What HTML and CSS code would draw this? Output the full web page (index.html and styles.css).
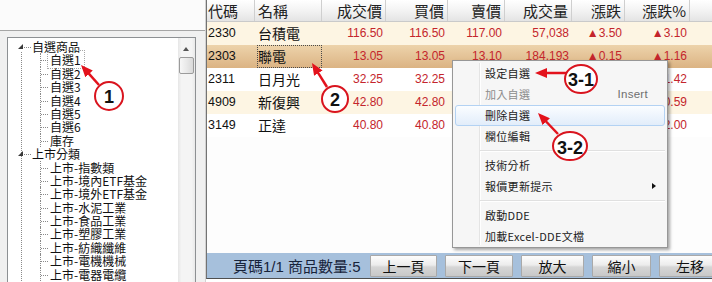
FILE: index.html
```html
<!DOCTYPE html>
<html lang="zh-Hant">
<head>
    <meta charset="UTF-8">
    <title>自選商品</title>
    <link rel="stylesheet" href="styles.css">
</head>
<body>
<div class="app">
    <div class="side">
        <div class="side-top"></div>
        <div class="side-body">
            <div class="tree-box">
                <ul class="tree">
                    <li>
                        <p class="label"><i class="arrow"></i>自選商品</p>
                        <ul class="sub">
                            <li><span class="focus">自選1</span></li>
                            <li>自選2</li>
                            <li>自選3</li>
                            <li>自選4</li>
                            <li>自選5</li>
                            <li>自選6</li>
                            <li>庫存</li>
                        </ul>
                    </li>
                    <li>
                        <p class="label"><i class="arrow"></i>上市分類</p>
                        <ul class="sub">
                            <li>上市-指數類</li>
                            <li>上市-境內ETF基金</li>
                            <li>上市-境外ETF基金</li>
                            <li>上市-水泥工業</li>
                            <li>上市-食品工業</li>
                            <li>上市-塑膠工業</li>
                            <li>上市-紡織纖維</li>
                            <li>上市-電機機械</li>
                            <li>上市-電器電纜</li>
                        </ul>
                    </li>
                </ul>
                <div class="vscroll">
                    <span class="up"></span>
                    <span class="thumb"></span>
                </div>
            </div>
        </div>
    </div>

    <div class="quote">
        <div class="grid">
            <div class="row head">
                <span class="l">代碼</span><span class="l n">名稱</span><span>成交價</span><span>買價</span><span>賣價</span><span>成交量</span><span>漲跌</span><span>漲跌%</span><span></span>
            </div>
            <div class="row odd">
                <span class="code">2330</span><span class="name">台積電</span><span>116.50</span><span>116.50</span><span>117.00</span><span>57,038</span><span>▲3.50</span><span>▲3.10</span><span></span>
            </div>
            <div class="row sel">
                <span class="code">2303</span><span class="name focus">聯電</span><span>13.05</span><span>13.05</span><span>13.10</span><span>184,193</span><span>▲0.15</span><span>▲1.16</span><span></span>
            </div>
            <div class="row">
                <span class="code">2311</span><span class="name">日月光</span><span>32.25</span><span>32.25</span><span></span><span></span><span></span><span>▲1.42</span><span></span>
            </div>
            <div class="row odd">
                <span class="code">4909</span><span class="name">新復興</span><span>42.80</span><span>42.80</span><span></span><span></span><span></span><span>▲0.59</span><span></span>
            </div>
            <div class="row">
                <span class="code">3149</span><span class="name">正達</span><span>40.80</span><span>40.80</span><span></span><span></span><span></span><span>▲2.00</span><span></span>
            </div>
        </div>
        <div class="blank"></div>
        <div class="pager">
            <p class="info">頁碼1/1 商品數量:5</p>
            <button class="w67">上一頁</button>
            <button class="w68">下一頁</button>
            <button class="w63">放大</button>
            <button class="w59">縮小</button>
            <button class="w62">左移</button>
        </div>
    </div>

    <ul class="menu">
        <li>設定自選</li>
        <li class="off">加入自選<span class="key">Insert</span></li>
        <li class="hover">刪除自選</li>
        <li>欄位編輯</li>
        <li class="sep"></li>
        <li>技術分析</li>
        <li class="more">報價更新提示</li>
        <li class="sep"></li>
        <li>啟動DDE</li>
        <li>加載Excel-DDE文檔</li>
    </ul>

    <svg class="marks" width="712" height="282" viewBox="0 0 712 282">
        <defs>
            <marker id="head" markerUnits="userSpaceOnUse" viewBox="0 0 12 10" markerWidth="12" markerHeight="10" refX="1" refY="5" orient="auto">
                <path d="M0,0 L12,5 L0,10 z" fill="#e3121c"/>
            </marker>
        </defs>
        <g stroke="#e3121c" stroke-width="2.5" marker-end="url(#head)">
            <line x1="99" y1="85" x2="88.4" y2="73.2"/>
            <line x1="327" y1="87" x2="317.8" y2="72.3"/>
            <line x1="566" y1="73" x2="546" y2="73"/>
            <line x1="558" y1="134" x2="545.6" y2="121"/>
        </g>
        <g fill="#fff" stroke="#d9141e" stroke-width="2">
            <circle cx="109" cy="96" r="14"/>
            <circle cx="335" cy="99" r="13"/>
            <ellipse cx="581" cy="79" rx="16" ry="14"/>
            <ellipse cx="570" cy="146" rx="17" ry="14"/>
        </g>
        <g class="num" text-anchor="middle" dominant-baseline="central">
            <text x="109" y="97">1</text>
            <text x="335" y="100">2</text>
            <text x="581" y="80">3-1</text>
            <text x="570" y="148">3-2</text>
        </g>
    </svg>
</div>
</body>
</html>
```

FILE: styles.css
```css
body,p,ul { margin: 0; padding: 0;}
li { list-style: none;}
body {
    font-family: "Noto Sans CJK TC", sans-serif;
    background: #fff;
    color: #111;
}
.app {
    position: relative;
    display: flex;
    width: 712px;
    height: 282px;
    overflow: hidden;
}

/* left tree */
.side {
    width: 205px;
    flex: none;
    display: flex;
    flex-direction: column;
    border-right: 1px solid #d2d2d2;
    background: #f0f0f0;
}
.side-top {
    height: 30px;
    border-bottom: 1px solid #a5a5a5;
    background: #fbfbfb;
}
.side-body {
    flex: 1;
    min-height: 0;
    padding: 6px 9px 0 7px;
}
.tree-box {
    display: flex;
    height: 100%;
    border: 1px solid #8d9093;
    border-bottom: 0;
    background: #fff;
}
.tree {
    position: relative;
    flex: 1;
    padding-top: 2px;
    font-size: 12px;
}
.tree:before {
    content: '';
    position: absolute;
    left: 13px;
    top: 14px;
    bottom: 0;
    border-left: 1px dotted #8a8a8a;
}
.label {
    position: relative;
    height: 13.4px;
    line-height: 13.4px;
    padding-left: 24px;
    white-space: nowrap;
}
.label:before {
    content: '';
    position: absolute;
    left: 16px;
    top: 7px;
    width: 7px;
    border-top: 1px dotted #8a8a8a;
}
.arrow {
    position: absolute;
    left: 10px;
    top: 4px;
    width: 0;
    height: 0;
    border-left: 5px solid transparent;
    border-bottom: 5px solid #3a3a3a;
    z-index: 1;
}
.sub li {
    position: relative;
    height: 13.4px;
    line-height: 13.4px;
    padding-left: 42px;
    white-space: nowrap;
}
.sub li:before {
    content: '';
    position: absolute;
    left: 32px;
    top: 0;
    height: 13.4px;
    border-left: 1px dotted #8a8a8a;
}
.sub li:after {
    content: '';
    position: absolute;
    left: 33px;
    top: 7px;
    width: 7px;
    border-top: 1px dotted #8a8a8a;
}
.tree .focus {
    margin-left: -2px;
    padding: 0 3px 0 2px;
    outline: 1px dotted #a8a8a8;
}
.vscroll {
    position: relative;
    width: 17px;
    flex: none;
    background: linear-gradient(to right, #e6e6e6, #f4f4f4 20%, #f4f4f4 80%, #e9e9e9);
}
.vscroll .up {
    position: absolute;
    left: 5px;
    top: 9px;
    border-left: 3px solid transparent;
    border-right: 3px solid transparent;
    border-bottom: 4px solid #555;
}
.vscroll .thumb {
    position: absolute;
    left: 1px;
    top: 19px;
    width: 13px;
    height: 15px;
    border: 1px solid #9b9b9b;
    border-radius: 2px;
    background: linear-gradient(to right, #f7f7f7, #e9e9e9 50%, #d9d9d9);
}

/* quote table */
.quote {
    flex: 1;
    display: flex;
    flex-direction: column;
    height: 279px;
    box-sizing: border-box;
    border-left: 1px solid #737373;
    border-bottom: 1px solid #4f4f4f;
}
.row {
    display: grid;
    grid-template-columns: 48px 67px 64px 62px 57px 67px 53px 65px 1fr;
    height: 23px;
    font: 12px/23px "Liberation Sans", Arial, sans-serif;
    color: #c4252c;
    text-align: right;
    white-space: nowrap;
}
.row span {
    padding-right: 3px;
    overflow: hidden;
}
.row .code {
    text-align: left;
    padding-left: 1px;
    color: #111;
    font-size: 12.5px;
}
.row .name {
    text-align: left;
    padding-left: 3px;
    color: #111;
    font: 14px/23px "Noto Sans CJK TC", sans-serif;
}
.row .focus {
    outline: 1px dotted #4a4a4a;
    outline-offset: -1px;
    margin-left: 2px;
    padding-left: 1px;
}
.odd {
    background: #fdf5e3;
}
.sel {
    background: linear-gradient(#edd3ab, #dbb383);
}
.head {
    height: 22px;
    box-sizing: border-box;
    border-bottom: 1px solid #cacaca;
    background: linear-gradient(#ffffff, #f3f3f3 50%, #e4e4e4);
    font: 15px/21px "Noto Sans CJK TC", sans-serif;
    color: #222;
}
.head span {
    border-right: 1px solid #cfcfcf;
}
.head span:last-child {
    border-right: 0;
}
.head .l {
    text-align: left;
    padding-left: 1px;
}
.head .n {
    padding-left: 3px;
}
.blank {
    flex: 1;
    background: #fdfdfd;
}
.pager {
    display: flex;
    align-items: center;
    height: 25px;
    background: #a6c0dc;
    white-space: nowrap;
}
.pager .info {
    width: 137px;
    padding-left: 26px;
    flex: none;
    font: 15px "Liberation Sans", "Noto Sans CJK TC", sans-serif;
    color: #17233a;
}
.pager button {
    height: 22px;
    margin-right: 8px;
    padding: 0;
    flex: none;
    border: 1px solid #a9a9a9;
    border-radius: 1px;
    background: linear-gradient(#fdfdfd, #ececec 45%, #d6d6d6 55%, #c8c8c8);
    font: 14px/20px "Noto Sans CJK TC", sans-serif;
    color: #111;
}
.w67 { width: 67px;}
.w68 { width: 68px;}
.w63 { width: 63px;}
.w59 { width: 59px;}
.w62 { width: 62px;}

/* context menu */
.menu {
    position: absolute;
    left: 452px;
    top: 60px;
    width: 216px;
    height: 188px;
    box-sizing: border-box;
    padding: 2px;
    border: 1px solid #979797;
    background: #f6f6f6;
    box-shadow: 2px 2px 3px rgba(0, 0, 0, .35);
    font-size: 11px;
    letter-spacing: .3px;
    color: #1b1b1b;
}
.menu:before {
    content: '';
    position: absolute;
    left: 26px;
    top: 2px;
    bottom: 2px;
    width: 1px;
    background: #e4e4e4;
    border-right: 1px solid #fff;
}
.menu li {
    position: relative;
    height: 21px;
    line-height: 19px;
    padding-left: 29px;
    border: 1px solid transparent;
    border-radius: 3px;
    box-sizing: border-box;
    white-space: nowrap;
}
.menu .off {
    color: #8c8c8c;
}
.menu .key {
    position: absolute;
    right: 16px;
    top: 0;
    font: 11.5px/19px "Liberation Sans", Arial, sans-serif;
    color: #6e6e6e;
}
.menu .hover {
    border-color: #b3d2f3;
    background: linear-gradient(#fbfdff, #eef5fd 50%, #e2edfa);
}
.menu .more:after {
    content: '';
    position: absolute;
    right: 8px;
    top: 6px;
    border-top: 3px solid transparent;
    border-bottom: 3px solid transparent;
    border-left: 4px solid #111;
}
.menu .sep {
    height: 8px;
    border: 0;
    padding: 0;
}
.menu .sep:before {
    content: '';
    position: absolute;
    left: 25px;
    right: 0;
    top: 3px;
    height: 1px;
    background: #e0e0e0;
    border-bottom: 1px solid #fff;
}

/* annotations */
.marks {
    position: absolute;
    left: 0;
    top: 0;
    pointer-events: none;
}
.num text {
    font: bold 18px "Liberation Sans", Arial, sans-serif;
    fill: #111;
}
```
